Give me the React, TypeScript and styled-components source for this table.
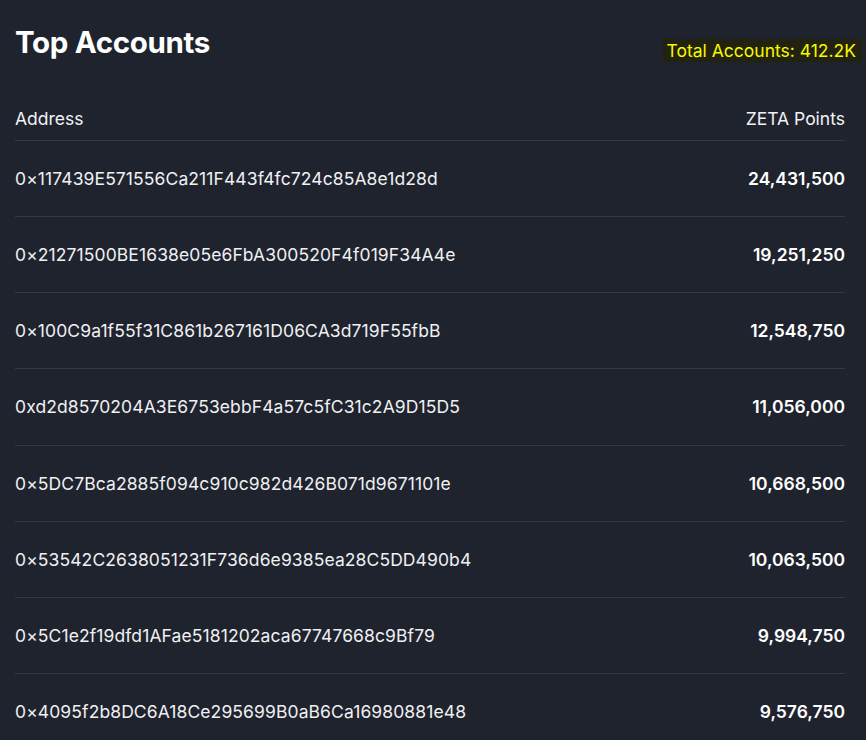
import React from "react";
import styled, { createGlobalStyle } from "styled-components";

const GlobalStyle = createGlobalStyle`
  html, body {
    margin: 0;
    padding: 0;
    background: #1f232e;
  }
  body {
    font-family: Inter, "Noto Sans", sans-serif;
    color: #ffffff;
  }
`;

const Page = styled.div`
  width: 866px;
  height: 740px;
  overflow: hidden;
  background: #1f232e;
  box-sizing: border-box;
  padding: 24px 0 0 15px;
`;

const TopBar = styled.div`
  display: flex;
  justify-content: space-between;
  align-items: flex-start;
  padding-right: 4px;
`;

const Title = styled.h1`
  margin: 0;
  font-size: 29.5px;
  font-weight: 700;
  letter-spacing: -0.35px;
  line-height: 36px;
  color: #ffffff;
`;

const Badge = styled.div`
  margin-top: 15px;
  padding: 0 6px 0 4px;
  background: #212310;
  color: #f8f800;
  font-size: 17.5px;
  line-height: 23px;
  font-weight: 400;
`;

const Table = styled.div`
  margin-top: 37px;
  margin-right: 21px;
  display: flex;
  flex-direction: column;
`;

const HeaderRow = styled.div`
  display: flex;
  justify-content: space-between;
  align-items: center;
  height: 38px;
  padding-bottom: 3px;
  border-bottom: 1px solid #343846;
  font-size: 17.5px;
  color: #f2f2f4;
`;

const Row = styled.div`
  display: flex;
  justify-content: space-between;
  align-items: center;
  height: 75.14px;
  border-bottom: 1px solid #343846;
`;

const Address = styled.span`
  font-size: 17.5px;
  letter-spacing: 0.1px;
  color: #f0f0f2;
  font-weight: 400;
`;

const Points = styled.span`
  font-size: 17.5px;
  font-weight: 600;
  color: #ffffff;
`;

const rows: [string, string][] = [
  ["0×117439E571556Ca211F443f4fc724c85A8e1d28d", "24,431,500"],
  ["0×21271500BE1638e05e6FbA300520F4f019F34A4e", "19,251,250"],
  ["0×100C9a1f55f31C861b267161D06CA3d719F55fbB", "12,548,750"],
  ["0xd2d8570204A3E6753ebbF4a57c5fC31c2A9D15D5", "11,056,000"],
  ["0×5DC7Bca2885f094c910c982d426B071d9671101e", "10,668,500"],
  ["0×53542C2638051231F736d6e9385ea28C5DD490b4", "10,063,500"],
  ["0×5C1e2f19dfd1AFae5181202aca67747668c9Bf79", "9,994,750"],
  ["0×4095f2b8DC6A18Ce295699B0aB6Ca16980881e48", "9,576,750"],
];

export default function App() {
  return (
    <>
      <GlobalStyle />
      <Page>
        <TopBar>
          <Title>Top Accounts</Title>
          <Badge>Total Accounts: 412.2K</Badge>
        </TopBar>
        <Table>
          <HeaderRow>
            <span>Address</span>
            <span>ZETA Points</span>
          </HeaderRow>
          {rows.map(([addr, pts]) => (
            <Row key={addr}>
              <Address>{addr}</Address>
              <Points>{pts}</Points>
            </Row>
          ))}
        </Table>
      </Page>
    </>
  );
}
